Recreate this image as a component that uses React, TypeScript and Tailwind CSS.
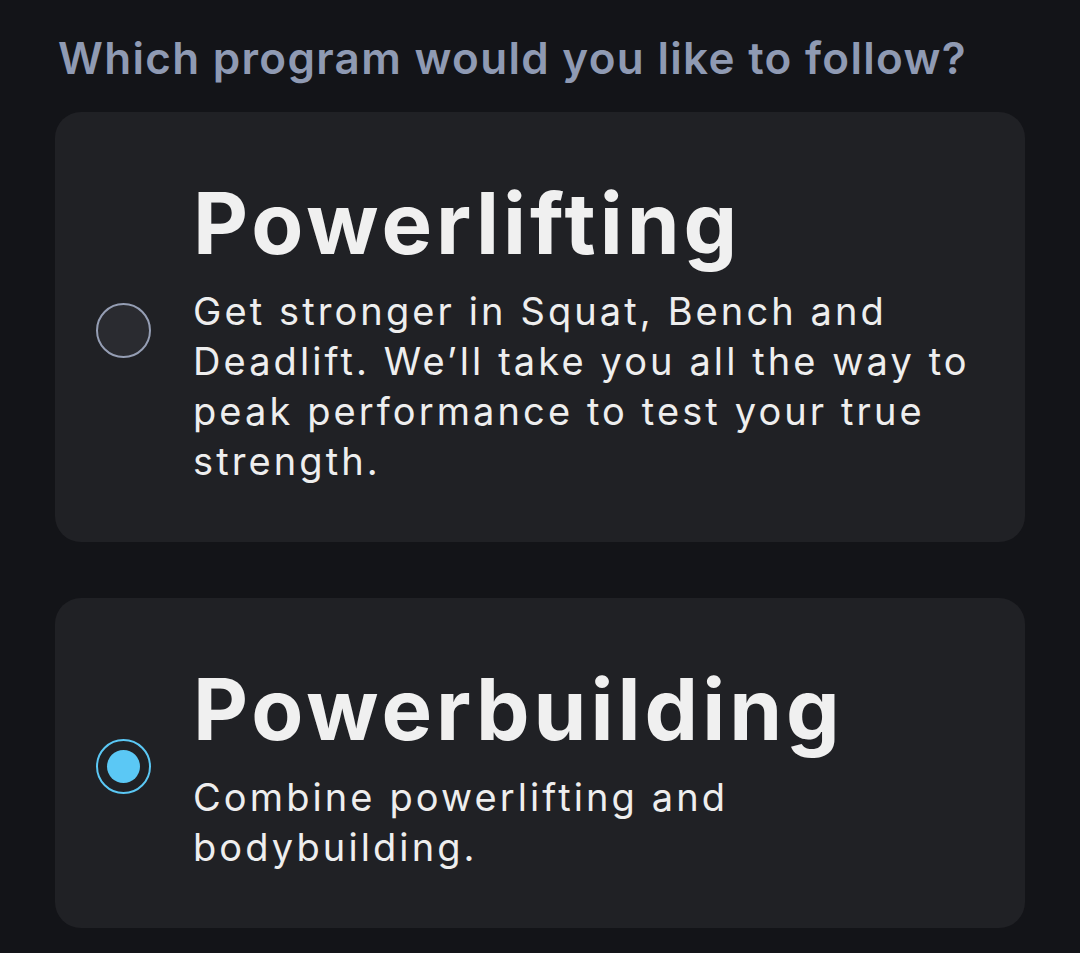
import React, { useState } from 'react';

type Program = {
  id: string;
  title: string;
  description: string;
};

const programs: Program[] = [
  {
    id: 'powerlifting',
    title: 'Powerlifting',
    description:
      "Get stronger in Squat, Bench and Deadlift. We\u2019ll take you all the way to peak performance to test your true strength.",
  },
  {
    id: 'powerbuilding',
    title: 'Powerbuilding',
    description: 'Combine powerlifting and bodybuilding.',
  },
];

const RadioDot = ({ checked }: { checked: boolean }) => (
  <span
    className={`flex h-[55px] w-[55px] shrink-0 items-center justify-center rounded-full border-[2.5px] ${
      checked ? 'border-[#5bc8f5] bg-transparent' : 'border-[#959eb4] bg-[#2a2b30]'
    }`}
  >
    {checked ? <span className="h-[33px] w-[33px] rounded-full bg-[#5bc8f5]" /> : null}
  </span>
);

export default function App() {
  const [selected, setSelected] = useState('powerbuilding');

  return (
    <div className="min-h-[953px] w-[1080px] bg-[#131418] px-[55px] pt-[30px] font-['Inter',sans-serif]">
      <h1 className="pl-[3px] text-[44px] font-semibold leading-[56px] tracking-[1.3px] text-[#8f9ab3]">
        Which program would you like to follow?
      </h1>

      <div className="mt-[26px] flex flex-col gap-[56px]">
        {programs.map((program) => (
          <button
            key={program.id}
            type="button"
            onClick={() => setSelected(program.id)}
            className="flex w-[970px] items-center gap-[42px] rounded-[26px] bg-[#202125] pb-[56px] pl-[41px] pr-[20px] pt-[62px] text-left"
          >
            <RadioDot checked={selected === program.id} />
            <div className="min-w-0 max-w-[800px]">
              <h2 className="text-[85px] font-bold leading-[100px] tracking-[4px] text-[#f0f0f0]">
                {program.title}
              </h2>
              <p className="mt-[12px] text-[38px] leading-[50px] tracking-[3.1px] text-[#eeeeee]">
                {program.description}
              </p>
            </div>
          </button>
        ))}
      </div>
    </div>
  );
}
